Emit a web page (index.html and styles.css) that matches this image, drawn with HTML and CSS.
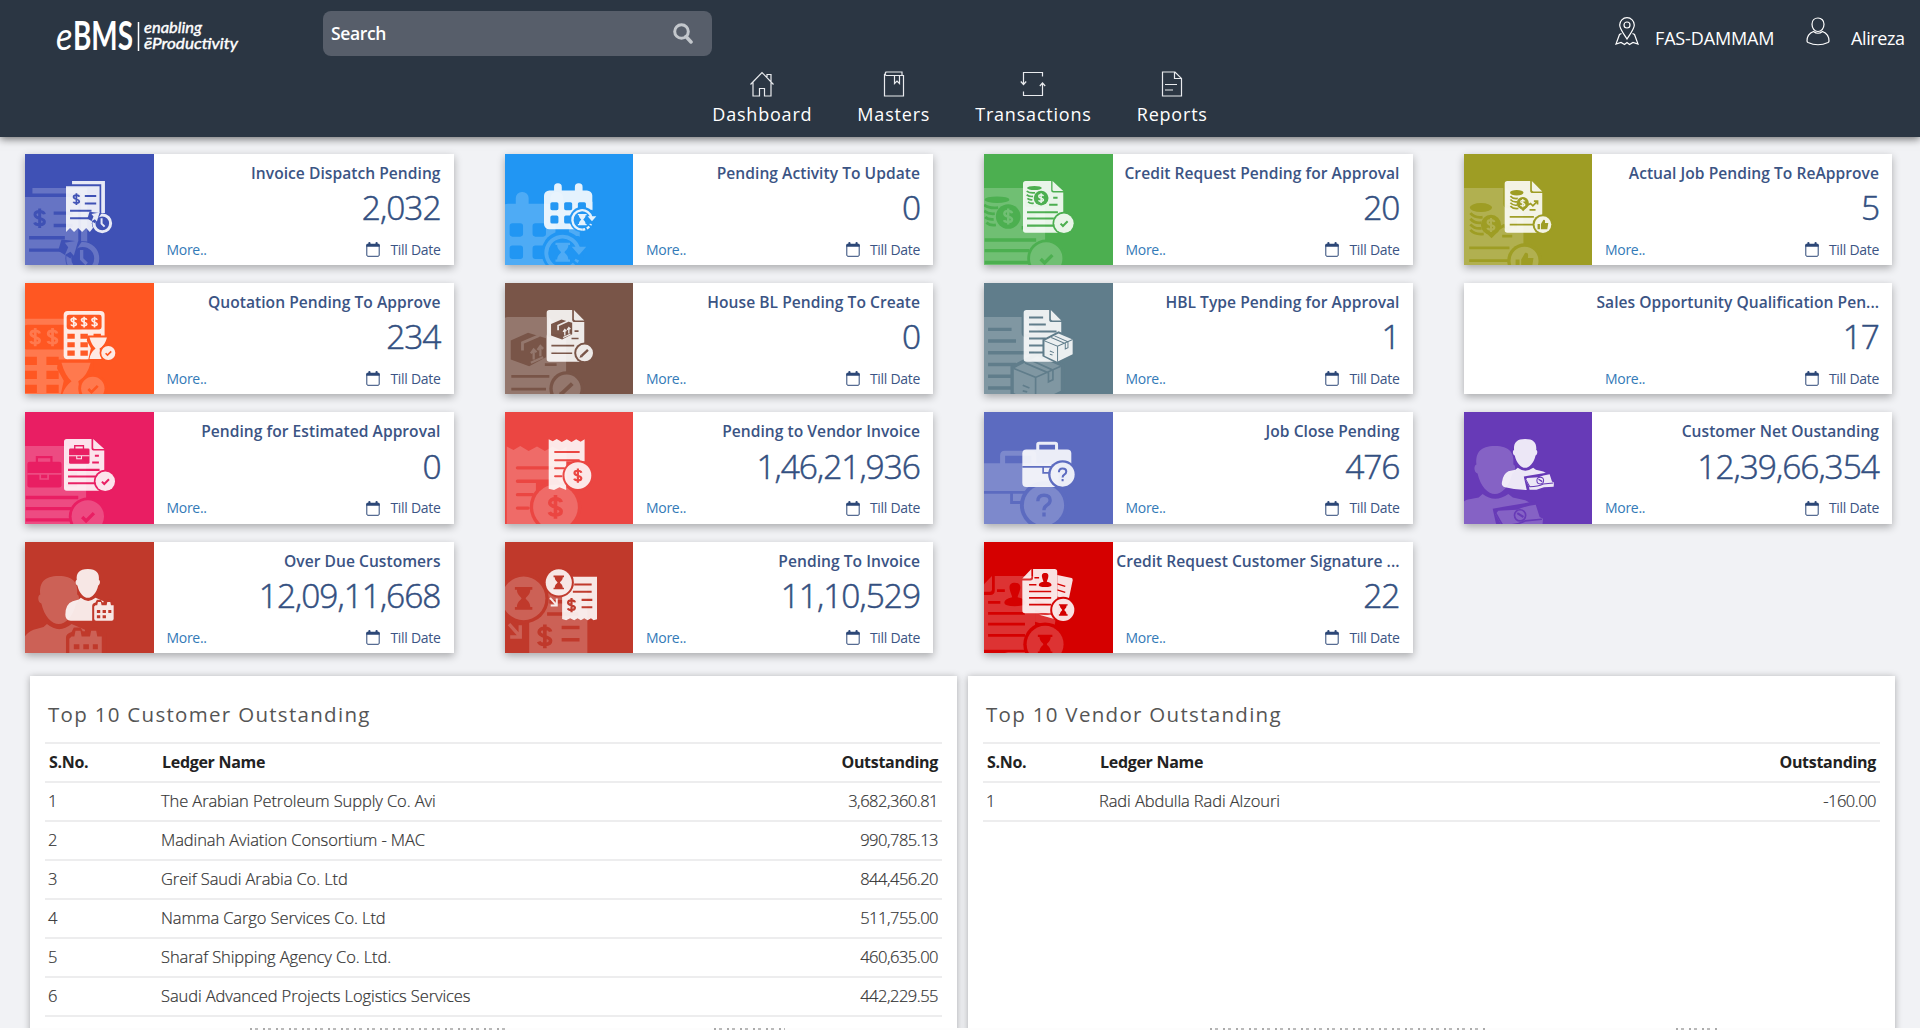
FILE: index.html
```html
<!DOCTYPE html>
<html lang="en">
<head>
<meta charset="utf-8">
<title>eBMS Dashboard</title>
<link rel="stylesheet" href="styles.css">
</head>
<body>
<svg class="sprite" width="0" height="0" aria-hidden="true">
  <defs>
    <path id="usd" d="M6-5C5-9.500-6-10-6-4.500S6-.5 6 4.500-5 9.500-6.500 5.500M0-12.500V12.500" fill="none" stroke-width="3.800"/>
    <path id="check" d="M-10 1L-3 8L11-6" fill="none" stroke-width="6"/>
    <path id="hourglass" d="M-13-17H13V-13H10C10-5 4-3 3 0C4 3 10 5 10 13H13V17H-13V13H-10C-10 5-4 3-3 0C-4-3-10-5-10-13H-13Z"/>
    <g id="paper">
      <path class="w" d="M16 0H84V28Q84 36 92 36H120V146Q120 154 112 154H16Q8 154 8 146V8Q8 0 16 0Z"/>
      <path class="w" d="M89 0L120 31H94Q89 31 89 26Z"/>
    </g>
    <g id="badge-check">
      <circle class="k" cx="122" cy="126" r="34"/><circle class="w" cx="122" cy="126" r="29"/>
      <use href="#check" class="ks" x="122" y="126"/>
    </g>
  </defs>

  <symbol id="i-invoice" viewBox="0 0 152 152">
    <path class="w" d="M24 0H122V96H111V10H24Z"/>
    <path class="w" d="M6 16H106V138L98 146L88 138L77 152L66 140L54 152L42 140L30 152L18 140L6 152Z"/>
    <use href="#usd" class="ks" transform="translate(37 54) scale(1.400)"/>
    <path class="ks" stroke-width="6" d="M62 45H96M62 67H96M18 89H82M18 111H82"/>
    <circle class="k" cx="114" cy="126" r="31"/>
    <circle class="ws" stroke-width="9" cx="114" cy="126" r="25"/>
    <path class="k" d="M76 92L112 96L92 126L70 112Z"/>
    <path class="w" d="M82 98L106 94L98 121L92 114L82 120L88 106Z"/>
    <path class="ws" stroke-width="6" d="M112 111V127L121 136"/>
  </symbol>

  <symbol id="i-calendar" viewBox="0 0 152 152">
    <rect class="w" x="0" y="28" width="144" height="116" rx="16"/>
    <rect class="w" x="30" y="7" width="23" height="34" rx="11"/><rect class="w" x="92" y="7" width="23" height="34" rx="11"/>
    <path class="k" d="M24 63h14q5 0 5 5v14q0 5-5 5h-14q-5 0-5-5v-14q0-5 5-5zm41 0h14q5 0 5 5v14q0 5-5 5h-14q-5 0-5-5v-14q0-5 5-5zm41 0h14q5 0 5 5v14h-24v-14q0-5 5-5zM24 103h14q5 0 5 5v14q0 5-5 5h-14q-5 0-5-5v-14q0-5 5-5zm41 0h19v24h-19q-5 0-5-5v-14q0-5 5-5z"/>
    <circle class="k" cx="114" cy="115" r="38"/><path class="k" d="M130 86H150V120H124Z"/>
    <path class="w" d="M126 62H144V88Z"/>
    <path class="ws" stroke-width="7" d="M142 110A29 29 0 1 0 114 145"/>
    <path class="ws" stroke-width="7" stroke-dasharray="9 5" d="M114 145A29 29 0 0 0 140 128"/>
    <path class="w" d="M130 105L143 120L156 105Z"/>
    <use href="#hourglass" class="w" x="114" y="115"/>
  </symbol>

  <symbol id="i-credit" viewBox="0 0 152 152">
    <path class="w" d="M8 0H84V28Q84 34 90 34H120V146Q120 154 112 154H8Q0 154 0 146V8Q0 0 8 0Z"/>
    <path class="w" d="M88 0L120 30H92Q88 30 88 26Z"/>
    <ellipse class="k" cx="34" cy="21" rx="22" ry="6"/>
    <path class="ks" stroke-width="5" d="M11 30Q20 37 36 35M11 41Q18 47 30 46M13 52Q18 57 28 56M15 62Q22 68 32 66"/>
    <circle class="k" cx="54" cy="51" r="22"/><use href="#usd" class="ws" transform="translate(54 51) scale(1.150)"/>
    <path class="ks" stroke-width="6" d="M90 50H103M78 71H103M12 93H104M12 112H92M12 133H92"/>
    <use href="#badge-check"/>
  </symbol>

  <symbol id="i-job" viewBox="0 0 152 152">
    <use href="#paper" x="-3"/>
    <ellipse class="k" cx="41" cy="35" rx="20" ry="8"/>
    <path class="ks" stroke-width="5" d="M22 45Q30 54 44 52M22 55Q30 64 42 62M22 65Q30 74 42 72M22 75Q30 84 46 82"/>
    <circle class="k" cx="59" cy="66" r="18"/><path class="k" d="M50 80L60 90L72 78Z"/>
    <use href="#usd" class="ws" x="59" y="66"/>
    <path class="ks" stroke-width="5" d="M74 72L82 67L89 74L102 61M92 60H103V70M79 86H97M20 107H92M20 130H92"/>
    <circle class="k" cx="119" cy="130" r="31"/><circle class="w" cx="119" cy="130" r="25"/>
    <path class="k" d="M103 128H110V144H103ZM113 128L120 116Q127 114 125 125H135L132 144H113Z"/>
  </symbol>

  <symbol id="i-quote" viewBox="0 0 152 152">
    <rect class="w" x="-1" y="3" width="122" height="144" rx="12"/>
    <rect class="k" x="8" y="14" width="104" height="44" rx="7"/>
    <use href="#usd" class="ws" transform="translate(29 36) scale(1.300)"/><use href="#usd" class="ws" transform="translate(60 36) scale(1.300)"/><use href="#usd" class="ws" transform="translate(91 36) scale(1.300)"/>
    <path class="k" d="M10 71h22v15h-22zM49 71h22v15h-22zM88 71h22v15h-22zM10 96h22v15h-22zM49 96h22v15h-22zM10 121h22v15h-22zM49 121h22v15h-22z"/>
    <path class="k" d="M70 76H134V100L118 112L122 150H72L80 114L68 92Z"/>
    <path class="w" d="M76 82H128Q122 106 106 115L112 146H76Q78 128 94 115Q82 104 76 82Z"/>
    <circle class="k" cx="132" cy="128" r="26"/><circle class="w" cx="132" cy="128" r="21"/>
    <use href="#check" class="ks" transform="translate(132 128) scale(.8)"/>
  </symbol>

  <symbol id="i-house" viewBox="0 0 152 152">
    <use href="#paper"/>
    <path class="k" d="M21 42L52 28L84 38V72L54 88L21 76Z"/>
    <path class="ws" stroke-width="5" d="M42 60V46L72 33"/>
    <path class="ws" stroke-width="4" d="M57 82L79 72M62 76V60M74 70V54M57 65L62 58L67 63M69 59L74 52L79 57"/>
    <path class="ks" stroke-width="5" d="M91 63H103M82 85H103M22 106H90M22 129H84"/>
    <circle class="k" cx="121" cy="128" r="31"/><circle class="w" cx="121" cy="128" r="25"/>
    <path class="ks" stroke-width="7" d="M112 137L131 119"/><path class="k" d="M106 142L109 133L116 140Z"/>
  </symbol>

  <symbol id="i-hbl" viewBox="0 0 152 152">
    <use href="#paper" x="-6"/>
    <path class="ks" stroke-width="6" d="M18 22H60M18 43H68M18 64H100M18 85H68M18 106H60M18 127H60"/>
    <path class="k" d="M106 63L154 84V134L102 160L58 138V88Z"/>
    <path class="w" d="M106 70L148 88V132L102 154L64 136V92Z"/>
    <path class="ks" stroke-width="3" d="M64 92L103 108L148 88M103 108V154M84 82L126 100V116L134 112V95L94 77M80 122L92 127M80 132L88 134"/>
  </symbol>

  <symbol id="i-estimate" viewBox="0 0 152 152">
    <path class="w" d="M8 0H82V28Q82 34 88 34H120V146Q120 154 112 154H8Q0 154 0 146V8Q0 0 8 0Z"/>
    <path class="w" d="M87 0L120 30H91Q87 30 87 26Z"/>
    <rect class="k" x="15" y="28" width="61" height="46" rx="4"/><path class="ks" stroke-width="4" d="M32 30V20H58V30"/>
    <path class="ws" stroke-width="3" d="M15 50H76M38 50V59H52V50"/>
    <path class="ks" stroke-width="6" d="M92 50H104M84 70H104M12 92H106M12 112H94M12 132H94"/>
    <use href="#badge-check" x="1"/>
  </symbol>

  <symbol id="i-vendor" viewBox="0 0 152 152">
    <path class="w" d="M14 1L26 7L38 0L53 9L68 1L82 9L96 1L109 8L121 1V66H66V152L46 144L30 152L14 148Z"/>
    <path class="ks" stroke-width="6" stroke-linecap="round" d="M33 39H104M33 63H104M33 87H60M33 111H52"/>
    <circle class="k" cx="101" cy="109" r="46"/><circle class="w" cx="101" cy="109" r="40"/>
    <use href="#usd" class="ks" transform="translate(101 109) scale(1.700)"/>
  </symbol>

  <symbol id="i-close" viewBox="0 0 152 152">
    <path class="ws" stroke-width="9" d="M44 34V17Q44 13 48 13H96Q100 13 100 17V34"/>
    <path class="w" d="M10 31H132Q144 31 144 43V92Q144 143 100 143H10Q-2 143-2 131V43Q-2 31 10 31Z"/>
    <path class="ks" stroke-width="5" d="M-2 83H90M60 83V101H84"/>
    <circle class="k" cx="118" cy="106" r="43"/><circle class="w" cx="118" cy="106" r="36"/>
    <path class="ks" stroke-width="6" d="M107 99Q107 88 118 88Q129 88 129 97Q129 103 123 106Q118 109 118 115M118 119V126"/>
  </symbol>

  <symbol id="i-net" viewBox="0 0 152 152">
    <path class="w" d="M66 0C92 0 101 12 99 33C104 34 103 47 97 49C92 72 78 86 66 86C54 86 40 72 35 49C28 47 28 34 33 33C31 12 40 0 66 0Z"/>
    <path class="w" d="M44 86Q66 103 90 86L98 92L120 97Q130 101 132 106L100 150Q52 156 6 144Q-6 140-3 128Q0 104 16 96L37 92Z"/>
    <path class="k" d="M62 112L84 108L138 99L148 120L120 158L72 158Z"/>
    <path class="w" d="M67 122L77 140L79 151L100 151L122 144L151 142L152 130L146 127L139 105Q118 108 106 114L72 116Z"/>
    <path class="ks" stroke-width="3" d="M67 119Q74 132 80 142Q104 142 120 134L150 131"/><circle class="ks" stroke-width="3" cx="111" cy="124" r="10"/><path class="ks" stroke-width="4" d="M106 120L117 127"/>
  </symbol>

  <symbol id="i-overdue" viewBox="0 0 152 152">
    <path class="w" d="M71 0C97 0 106 12 104 33C109 34 108 47 102 49C97 72 83 86 71 86C59 86 45 72 40 49C33 47 33 34 38 33C36 12 45 0 71 0Z"/>
    <path class="w" d="M50 86Q72 104 94 86L118 96L120 154H20Q4 152 4 136Q4 104 26 96L44 91Z"/>
    <path class="k" d="M84 160V110Q84 103 94 100L98 92H110L114 99H124L130 92H140L144 102H156V160Z"/>
    <path class="w" d="M94 108H99L101 98H110L112 108H127L129 98H138L140 108H148V148Q148 154 142 154H96Q90 154 90 148V112Z"/>
    <path class="k" d="M98 122h10v9h-10zm17 0h10v9h-10zm17 0h9v9h-9zM98 138h10v9h-10zm17 0h10v9h-10z"/>
  </symbol>

  <symbol id="i-pending" viewBox="0 0 152 152">
    <path class="w" d="M68 23H158V150L148 153L140 147L130 153L120 147L110 153L100 147L90 153L78 147L66 153L54 149V80Q84 70 88 47H68Z"/>
    <circle class="k" cx="44" cy="40" r="45"/><circle class="w" cx="44" cy="40" r="39"/>
    <use href="#hourglass" class="k" transform="translate(44 40) scale(1.200)"/>
    <use href="#usd" class="ks" transform="translate(82 108) scale(1.700)"/>
    <path class="ks" stroke-width="6" d="M90 46H142M86 68H142M112 92H144M112 114H144"/>
    <path class="ws" stroke-width="6" d="M18 86L36 106M38 88V109H20"/>
  </symbol>

  <symbol id="i-signature" viewBox="0 0 152 152">
    <path class="w" d="M102 18L145 27Q149 28 148 34L136 92L102 82Z"/><path class="ks" stroke-width="4" d="M102 44L126 52M102 62L126 70"/>
    <path class="w" d="M48 136H90L96 150Z"/>
    <path class="w" d="M30 0H94Q102 0 102 8V124Q102 132 94 132H6Q-2 132-2 124V34H22Q30 34 30 26Z"/>
    <path class="w" d="M25 0V24Q25 28 21 28H-2Z"/>
    <path class="k" d="M66 12C75 12 77 18 75 25C73 33 71 35 71 38Q85 41 85 48Q85 54 66 54T47 48Q47 41 61 38C61 35 59 33 57 25C55 18 57 12 66 12Z"/>
    <path class="ks" stroke-width="5" d="M34 26H48M18 47H40M18 67H84M18 86H84M18 106H84"/>
    <circle class="k" cx="120" cy="122" r="39"/><circle class="w" cx="120" cy="122" r="33"/>
    <use href="#hourglass" class="k" x="120" y="122"/>
  </symbol>

  <symbol id="i-date" viewBox="0 0 14 15">
    <path fill="none" stroke="currentColor" stroke-width="1" d="M.8 3V13.200Q.8 14.300 2 14.300H12Q13.200 14.300 13.200 13.200V3"/>
    <path fill="currentColor" d="M.3 4.800V2.700Q.3 1.700 1.300 1.700H2.300V1Q2.300 0 3.400 0T4.500 1V1.700H9.500V1Q9.500 0 10.600 0T11.700 1V1.700H12.700Q13.700 1.700 13.700 2.700V4.800Z"/>
  </symbol>
</svg>

<header class="topbar">
  <div class="topbar-main">
    <svg class="logo" width="184" height="36" viewBox="0 0 184 36" role="img" aria-label="eBMS enabling eProductivity">
      <text class="logo-e" x="-1" y="32" textLength="16.500" lengthAdjust="spacingAndGlyphs">e</text>
      <text class="logo-b" x="16" y="32" textLength="60" lengthAdjust="spacingAndGlyphs">BMS</text>
      <path d="M81.500 4V33" stroke="#fff" stroke-width="1.500"/>
      <text class="logo-t" x="87" y="14.500" textLength="58" lengthAdjust="spacingAndGlyphs">enabling</text>
      <text class="logo-t" x="87" y="31" textLength="94" lengthAdjust="spacingAndGlyphs">ēProductivity</text>
    </svg>
    <div class="search">
      <span>Search</span>
      <svg width="20" height="21" viewBox="0 0 20 21" fill="none" stroke="#c3c7cc"><circle cx="8.500" cy="8.500" r="6.800" stroke-width="3"/><path d="M13 13.500L18 19" stroke-width="3.500" stroke-linecap="round"/></svg>
    </div>
    <div class="account">
      <svg width="24" height="29" viewBox="0 0 24 29" fill="none" stroke="#fff" stroke-width="1.200"><path d="M12 22C9 17 4.700 12 4.700 8a7.300 7.300 0 0 1 14.600 0C19.300 12 15 17 12 22Z"/><circle cx="12" cy="8" r="3"/><path d="M6.500 16.500L4.500 17.500L1 27L6 25.500L9.500 27.500L12 25.500L14.500 27.500L18 25.500L23 27L19.500 17.500L17.500 16.500"/></svg>
      <span class="branch">FAS-DAMMAM</span>
      <svg width="24" height="29" viewBox="0 0 24 29" fill="none" stroke="#fff" stroke-width="1.200"><path d="M12 1C8.500 1 6 3.500 6 7.200C6 11 8.500 14.500 12 14.500S18 11 18 7.200C18 3.500 15.500 1 12 1Z"/><path d="M7.500 14.500C3.500 16 1 19 1 24Q1 25 2 25.500Q12 30 22 25.500Q23 25 23 24C23 19 20.500 16 16.500 14.500Q12 18 7.500 14.500Z"/></svg>
      <span class="user">Alireza</span>
    </div>
  </div>
  <nav class="menu">
    <a><svg width="26" height="26" viewBox="0 0 26 26"><path d="M1.500 13.500L13 1.500L24.500 13.500M4 11.500V25H10.500V17.500H15.500V25H22V11.500M18 6V3.500H22V11"/></svg>Dashboard</a>
    <a><svg width="26" height="26" viewBox="0 0 26 26"><path d="M5 4.500Q3.300 3 5 1H21V4.500M3.500 3V25H22.500V4.500H5M13.500 4.500V12.500L16 10L18.500 12.500V4.500"/></svg>Masters</a>
    <a><svg width="26" height="26" viewBox="0 0 26 26"><path d="M22.500 5.500V1.500H3.500V13M.8 10.500L3.500 13.500L6.200 10.500M3.500 20.500V24.500H22.500V13M19.800 15L22.500 12L25.200 15"/></svg>Transactions</a>
    <a><svg width="26" height="26" viewBox="0 0 26 26"><path d="M3.500 1H16L22.500 7.500V25H3.500ZM15.500 1V7.500H22.500M6 13.500H18M6 19H14"/></svg>Reports</a>
  </nav>
</header>

<main>
<section class="cards">
  <article class="card indigo"><div class="tile"><svg class="ghost"><use href="#i-invoice"/></svg><svg class="glyph"><use href="#i-invoice"/></svg></div><div class="info"><h3>Invoice Dispatch Pending</h3><strong>2,032</strong><footer><a>More..</a><span><svg><use href="#i-date"/></svg>Till Date</span></footer></div></article>
  <article class="card blue"><div class="tile"><svg class="ghost"><use href="#i-calendar"/></svg><svg class="glyph"><use href="#i-calendar"/></svg></div><div class="info"><h3>Pending Activity To Update</h3><strong>0</strong><footer><a>More..</a><span><svg><use href="#i-date"/></svg>Till Date</span></footer></div></article>
  <article class="card green"><div class="tile"><svg class="ghost"><use href="#i-credit"/></svg><svg class="glyph"><use href="#i-credit"/></svg></div><div class="info"><h3>Credit Request Pending for Approval</h3><strong>20</strong><footer><a>More..</a><span><svg><use href="#i-date"/></svg>Till Date</span></footer></div></article>
  <article class="card olive"><div class="tile"><svg class="ghost"><use href="#i-job"/></svg><svg class="glyph"><use href="#i-job"/></svg></div><div class="info"><h3>Actual Job Pending To ReApprove</h3><strong>5</strong><footer><a>More..</a><span><svg><use href="#i-date"/></svg>Till Date</span></footer></div></article>

  <article class="card orange"><div class="tile"><svg class="ghost"><use href="#i-quote"/></svg><svg class="glyph"><use href="#i-quote"/></svg></div><div class="info"><h3>Quotation Pending To Approve</h3><strong>234</strong><footer><a>More..</a><span><svg><use href="#i-date"/></svg>Till Date</span></footer></div></article>
  <article class="card brown"><div class="tile"><svg class="ghost"><use href="#i-house"/></svg><svg class="glyph"><use href="#i-house"/></svg></div><div class="info"><h3>House BL Pending To Create</h3><strong>0</strong><footer><a>More..</a><span><svg><use href="#i-date"/></svg>Till Date</span></footer></div></article>
  <article class="card slate"><div class="tile"><svg class="ghost"><use href="#i-hbl"/></svg><svg class="glyph"><use href="#i-hbl"/></svg></div><div class="info"><h3>HBL Type Pending for Approval</h3><strong>1</strong><footer><a>More..</a><span><svg><use href="#i-date"/></svg>Till Date</span></footer></div></article>
  <article class="card"><div class="tile"></div><div class="info"><h3>Sales Opportunity Qualification Pen...</h3><strong>17</strong><footer><a>More..</a><span><svg><use href="#i-date"/></svg>Till Date</span></footer></div></article>

  <article class="card pink"><div class="tile"><svg class="ghost"><use href="#i-estimate"/></svg><svg class="glyph"><use href="#i-estimate"/></svg></div><div class="info"><h3>Pending for Estimated Approval</h3><strong>0</strong><footer><a>More..</a><span><svg><use href="#i-date"/></svg>Till Date</span></footer></div></article>
  <article class="card coral"><div class="tile"><svg class="ghost"><use href="#i-vendor"/></svg><svg class="glyph"><use href="#i-vendor"/></svg></div><div class="info"><h3>Pending to Vendor Invoice</h3><strong>1,46,21,936</strong><footer><a>More..</a><span><svg><use href="#i-date"/></svg>Till Date</span></footer></div></article>
  <article class="card periwinkle"><div class="tile"><svg class="ghost"><use href="#i-close"/></svg><svg class="glyph"><use href="#i-close"/></svg></div><div class="info"><h3>Job Close Pending</h3><strong>476</strong><footer><a>More..</a><span><svg><use href="#i-date"/></svg>Till Date</span></footer></div></article>
  <article class="card purple"><div class="tile"><svg class="ghost"><use href="#i-net"/></svg><svg class="glyph"><use href="#i-net"/></svg></div><div class="info"><h3>Customer Net Oustanding</h3><strong>12,39,66,354</strong><footer><a>More..</a><span><svg><use href="#i-date"/></svg>Till Date</span></footer></div></article>

  <article class="card brick"><div class="tile"><svg class="ghost"><use href="#i-overdue"/></svg><svg class="glyph"><use href="#i-overdue"/></svg></div><div class="info"><h3>Over Due Customers</h3><strong>12,09,11,668</strong><footer><a>More..</a><span><svg><use href="#i-date"/></svg>Till Date</span></footer></div></article>
  <article class="card brick"><div class="tile"><svg class="ghost"><use href="#i-pending"/></svg><svg class="glyph"><use href="#i-pending"/></svg></div><div class="info"><h3>Pending To Invoice</h3><strong>11,10,529</strong><footer><a>More..</a><span><svg><use href="#i-date"/></svg>Till Date</span></footer></div></article>
  <article class="card red"><div class="tile"><svg class="ghost"><use href="#i-signature"/></svg><svg class="glyph"><use href="#i-signature"/></svg></div><div class="info"><h3>Credit Request Customer Signature ...</h3><strong>22</strong><footer><a>More..</a><span><svg><use href="#i-date"/></svg>Till Date</span></footer></div></article>
</section>

<section class="panels">
  <div class="panel">
    <h2>Top 10 Customer Outstanding</h2>
    <table>
      <thead><tr><th>S.No.</th><th>Ledger Name</th><th>Outstanding</th></tr></thead>
      <tbody>
        <tr><td>1</td><td>The Arabian Petroleum Supply Co. Avi</td><td>3,682,360.81</td></tr>
        <tr><td>2</td><td>Madinah Aviation Consortium - MAC</td><td>990,785.13</td></tr>
        <tr><td>3</td><td>Greif Saudi Arabia Co. Ltd</td><td>844,456.20</td></tr>
        <tr><td>4</td><td>Namma Cargo Services Co. Ltd</td><td>511,755.00</td></tr>
        <tr><td>5</td><td>Sharaf Shipping Agency Co. Ltd.</td><td>460,635.00</td></tr>
        <tr><td>6</td><td>Saudi Advanced Projects Logistics Services</td><td>442,229.55</td></tr>
      </tbody>
    </table>
  </div>
  <div class="panel">
    <h2>Top 10 Vendor Outstanding</h2>
    <table>
      <thead><tr><th>S.No.</th><th>Ledger Name</th><th>Outstanding</th></tr></thead>
      <tbody>
        <tr><td>1</td><td>Radi Abdulla Radi Alzouri</td><td>-160.00</td></tr>
      </tbody>
    </table>
  </div>
</section>
</main>
<div class="strip"><i></i><i></i><i></i><i></i></div>
</body>
</html>
```

FILE: styles.css
```css
* { box-sizing: border-box; }
html, body { height: 1030px; overflow: hidden; }
body {
  margin: 0;
  display: flex;
  flex-direction: column;
  background: #f1f2f5;
  font-family: "Open Sans", "Noto Sans", sans-serif;
  color: #333;
}
.sprite { position: absolute; }
symbol { overflow: visible; }

/* icon paints: w = sheet, k = knocked out */
.w { fill: #fff; }
.k { fill: var(--tile); }
.ws { fill: none; stroke: #fff; }
.ks { fill: none; stroke: var(--tile); }

/* header */
.topbar {
  height: 137px;
  flex: none;
  background: #2b3643;
  box-shadow: 0 2px 8px rgba(0, 0, 0, .55);
  color: #fff;
}
.topbar-main {
  display: flex;
  align-items: flex-start;
  height: 69px;
  padding: 11px 15px 0 57px;
}
.logo { margin-top: 7px; overflow: visible; }
.logo text { fill: #fff; font-family: Lato, sans-serif; }
.logo .logo-e { font-size: 38px; font-style: italic; }
.logo .logo-b { font-size: 41px; font-weight: 700; }
.logo .logo-t { font-size: 16px; font-style: italic; font-weight: 400; stroke: #fff; stroke-width: .4px; }
.search {
  display: flex;
  align-items: center;
  justify-content: space-between;
  width: 389px;
  height: 45px;
  margin-left: 82px;
  padding: 0 19px 1px 8px;
  border-radius: 8px;
  background: #575e6a;
  font-size: 17.500px;
  font-weight: 600;
  letter-spacing: -.35px;
}
.account {
  display: flex;
  margin-left: auto;
  padding-top: 6px;
  font-size: 18px;
  line-height: 24px;
}
.account span { padding-top: 9px; }
.account svg { flex: none; }
.branch { width: 118px; margin: 0 33px 0 16px; letter-spacing: -.15px; white-space: nowrap; }
.user { width: 54px; margin-left: 21px; letter-spacing: -.4px; white-space: nowrap; }
.menu {
  display: flex;
  justify-content: center;
  gap: 45px;
}
.menu a {
  display: flex;
  flex-direction: column;
  align-items: center;
  gap: 5px;
  font-size: 18px;
  line-height: 24px;
  letter-spacing: .8px;
}
.menu svg { fill: none; stroke: #e9ebee; stroke-width: 1.200; margin-top: 2px; }

/* summary cards */
.cards {
  display: grid;
  grid-template-columns: repeat(4, 428.500px);
  grid-auto-rows: 111.300px;
  gap: 18px 51px;
  padding: 16.700px 0 0 25px;
}
.card {
  display: grid;
  grid-template-columns: 128.500px 1fr;
  background: #fff;
  box-shadow: 0 3px 8px rgba(0, 0, 0, .3);
}
.tile {
  position: relative;
  overflow: hidden;
  background: var(--tile);
}
.tile svg { position: absolute; overflow: visible; }
.glyph { left: 39px; top: 27px; width: 51px; height: 51px; opacity: .88; }
.ghost { left: -6px; top: 34px; width: 85px; height: 85px; opacity: .2; }
.indigo { --tile: #3f51b5; }
.blue { --tile: #2196f3; }
.green { --tile: #4caf50; }
.olive { --tile: #9e9d24; }
.orange { --tile: #ff5722; }
.brown { --tile: #795548; }
.slate { --tile: #607d8b; }
.pink { --tile: #e91e63; }
.coral { --tile: #eb4642; }
.periwinkle { --tile: #5c6bc0; }
.purple { --tile: #673ab7; }
.brick { --tile: #c0392b; }
.red { --tile: #d50000; }
.info {
  display: flex;
  flex-direction: column;
  padding: 9px 13px 0 13px;
  color: #3b5484;
  text-align: right;
}
.info h3 {
  margin: 0 0 0 -13px;
  font-size: 15.600px;
  line-height: 20px;
  font-weight: 600;
  letter-spacing: .03px;
  white-space: nowrap;
}
.info strong {
  margin-top: 3.500px;
  font-size: 33.500px;
  line-height: 42px;
  font-weight: 300;
  letter-spacing: -1px;
  color: #334f80;
  -webkit-text-stroke: .5px #334f80;
}
.info footer {
  display: flex;
  justify-content: space-between;
  margin-top: 11.500px;
  font-size: 14px;
  line-height: 20px;
  letter-spacing: -.3px;
}
.info footer a { color: #337ab7; }
.info footer span { display: flex; align-items: center; gap: 10px; }
.info footer svg { width: 14px; height: 15px; color: #2c4777; }

/* tables */
.panels {
  display: grid;
  grid-template-columns: 927px 927px;
  gap: 11px;
  padding: 23px 0 0 30px;
}
.panel {
  height: 380px;
  padding: 25px 15px 0;
  background: #fff;
  box-shadow: 0 1px 7px rgba(0, 0, 0, .3);
}
.panel h2 {
  margin: 0 0 14px 3px;
  font-size: 20.500px;
  line-height: 27px;
  font-weight: 400;
  letter-spacing: 1.300px;
  color: #555;
}
table { width: 897px; border-collapse: collapse; table-layout: fixed; font-size: 16.500px; letter-spacing: -.1px; }
th, td { height: 39px; padding: 0 4px 1px; border-top: 2px solid #ededee; border-bottom: 2px solid #ededee; text-align: left; line-height: 20px; }
th { color: #222; font-weight: 700; font-size: 16px; letter-spacing: -.3px; }
td { color: #333; font-weight: 300; padding-left: 3px; -webkit-text-stroke: .2px #333; }
td:last-child { letter-spacing: -.5px; }
th:first-child { width: 113px; }
th:last-child, td:last-child { text-align: right; width: 260px; }

/* tops of the row hidden under the fold */
.strip {
  position: absolute;
  left: 0;
  bottom: 0;
  display: grid;
  grid-template-columns: 255px 71px 277px 44px;
  width: 100%;
  height: 2px;
  padding-left: 250px;
  background: #fdfdfd;
}
.strip i { background: repeating-linear-gradient(90deg, #aaa 0 2px, transparent 2px 5px, #bbb 5px 8px, transparent 8px 13px); }
.strip i:nth-child(2) { margin: 0 -209px 0 209px; }
.strip i:nth-child(3) { margin: 0 -634px 0 634px; }
.strip i:nth-child(4) { margin: 0 -823px 0 823px; }
```
